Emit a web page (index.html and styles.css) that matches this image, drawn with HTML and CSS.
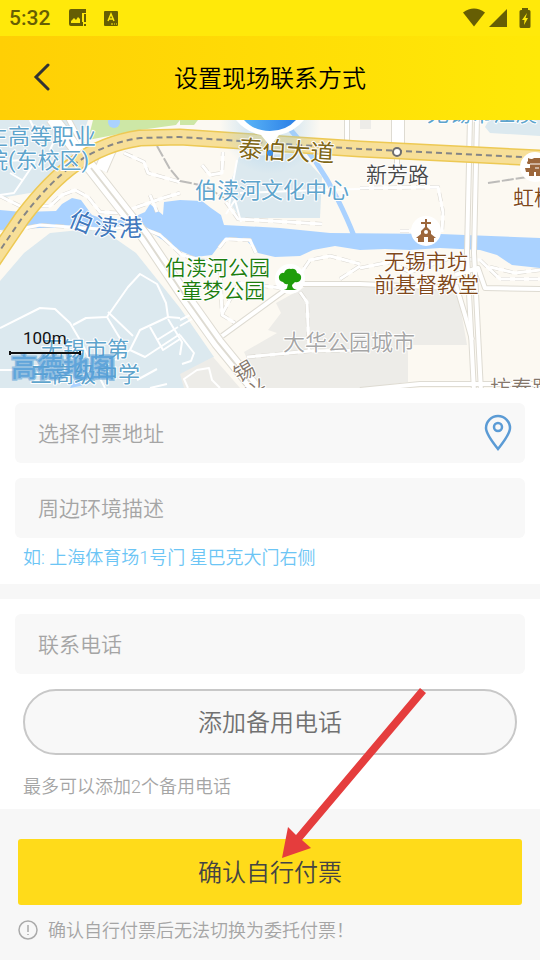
FILE: index.html
```html
<!DOCTYPE html>
<html lang="zh-CN">

<head>
    <meta charset="UTF-8">
    <meta name="viewport" content="width=device-width, initial-scale=1.0">
    <title>设置现场联系方式</title>
    <link rel="stylesheet" href="styles.css">
</head>

<body>
    <div class="status-bar">
        <span class="time">5:32</span>
        <svg class="status-image" width="20" height="20" viewBox="0 0 20 20">
            <path fill="#665e04" d="M3 1H18V5H14V14H15V18H3Q1 18 1 16V3Q1 1 3 1Z" />
            <path fill="#ffe90a" d="M3 15V13L6 10L8 12L10 9L12 11V15Z" />
            <path fill="#665e04" d="M16 6H18V14H16ZM16 16H18V18H16Z" />
        </svg>
        <svg class="status-input" width="16" height="18" viewBox="0 0 16 18">
            <rect x="1" y="2" width="14" height="15" rx="1" fill="#665e04" />
            <path d="M5 12L8 5L11 12M6 10H10" fill="none" stroke="#ffe90a" stroke-width="1.500" />
            <path d="M8 15H10M11 15H12M13 15H14" stroke="#ffe90a" />
        </svg>
        <div class="status-right">
            <svg width="24" height="20" viewBox="0 0 24 20">
                <path fill="#665e04" d="M1 4.500Q12 -3.500 23 4.500L12 18.500Z" />
            </svg>
            <svg width="20" height="20" viewBox="0 0 20 20">
                <path fill="#665e04" d="M1 19L19 1V19Z" />
            </svg>
            <svg class="battery" width="12" height="20" viewBox="0 0 12 20">
                <path fill="#665e04" d="M3 0H9V2H10Q11.500 2 11.500 3.500V18.500Q11.500 20 10 20H2Q0.500 20 0.500 18.500V3.500Q0.500 2 2 2H3Z" />
                <path fill="#ffe90a" d="M8 5L3 12H5.500L5 17L9 10H6.500Z" />
            </svg>
        </div>
    </div>

    <header class="header">
        <button class="back" type="button" aria-label="返回">
            <svg width="18" height="28" viewBox="0 0 18 28">
                <path d="M15 2L3 14L15 26" fill="none" stroke="#333" stroke-width="3" stroke-linecap="round" />
            </svg>
        </button>
        <h1>设置现场联系方式</h1>
    </header>

    <div class="map">
        <svg viewBox="0 120 540 268" preserveAspectRatio="xMidYMid slice">
            <defs>
                <linearGradient id="pin" x1="0" x2="1">
                    <stop offset="0" stop-color="#5bb5f7" />
                    <stop offset="1" stop-color="#2b7fe6" />
                </linearGradient>
                <radialGradient id="glow">
                    <stop offset="0.500" stop-color="#8fc5f0" stop-opacity="0.300" />
                    <stop offset="1" stop-color="#8fc5f0" stop-opacity="0" />
                </radialGradient>
            </defs>
            <rect x="0" y="120" width="540" height="268" fill="#fcf9f2" />

            <!-- 地块 -->
            <path class="school" d="M0 120H88L78 150L62 165L36 192L0 198Z" />
            <path class="school" d="M50 233L80 230L103 230L136 253L180 308L214 357L182 374L188 388H0V281L24 253Z" />
            <path class="school" d="M239 157L300 153L322 177L320 218H240L226 197Z" />
            <path class="school" d="M489 120H540V136L490 133L485 127Z" />
            <path class="park" d="M93 120H180L176 125L140 130L88 140Z" />
            <path class="park" d="M180 120H198L194 125H180Z" />
            <path class="block" d="M276 303L312 283L457 288L467 345H408V382L362 388H260L244 352L277 333L268 330L281 313Z" />
            <path class="block" d="M213 357L240 388H184L180 374Z" />
            <path class="block" d="M360 120H371V129H360Z" />

            <!-- 水系 -->
            <path class="water" d="M0 210L22 212L56 211L62 204L72 198L81 200L92 215L112 222L136 216L145 212L150 204L157 210L163 215L164 202L180 200L202 201L211 208L221 215L224 225L280 228L330 233L440 234L540 238V268L512 265L497 255L480 250L440 248L410 250L385 249L360 250L335 246L313 250L300 256L275 257L258 253L246 240L230 238L221 243L212 255L195 257L178 250L155 235L140 227L115 230L80 227L40 228L0 230Z" />
            <circle class="water" cx="114" cy="122" r="6" />
            <path class="water" d="M70 388L76 376L90 384Z" />
            <path class="canal" d="M289 128Q318 160 337 198Q348 220 354 236" />

            <!-- 小路 -->
            <g class="path-edge">
                <path d="M0 196L20 206L50 206L62 195L75 190L88 197L100 212L120 213L160 199L180 193" />
                <path d="M0 233L40 225L100 229L140 227L160 235L182 255L220 265L222 315L235 323" />
                <path d="M202 165L210 175L222 173L223 152" />
                <path d="M124 153L144 162L148 173L180 182" />
                <path d="M226 202L238 219L322 224" />
                <path d="M219 248L226 239L250 240L256 253" />
                <path d="M300 292L307 302L309 350M247 357L310 351L360 350" />
                <path d="M222 314L239 283L290 289L310 260L330 256L360 264" />
                <path d="M360 188L438 187L443 212L442 232M400 231H415" />
                <path d="M360 268L390 262L410 272L450 258L480 260L500 279L540 279" />
                <path d="M490 267L515 273L540 270M150 195L157 212M340 279L360 266" />
            </g>
            <g class="path">
                <path d="M0 196L20 206L50 206L62 195L75 190L88 197L100 212L120 213L160 199L180 193" />
                <path d="M0 233L40 225L100 229L140 227L160 235L182 255L220 265L222 315L235 323" />
                <path d="M202 165L210 175L222 173L223 152" />
                <path d="M124 153L144 162L148 173L180 182" />
                <path d="M226 202L238 219L322 224" />
                <path d="M219 248L226 239L250 240L256 253" />
                <path d="M300 292L307 302L309 350M247 357L310 351L360 350" />
                <path d="M222 314L239 283L290 289L310 260L330 256L360 264" />
                <path d="M360 188L438 187L443 212L442 232M400 231H415" />
                <path d="M360 268L390 262L410 272L450 258L480 260L500 279L540 279" />
                <path d="M490 267L515 273L540 270M150 195L157 212M340 279L360 266" />
            </g>
            <g class="lane">
                <path d="M0 328L40 308L55 309L70 323L80 340L105 388" />
                <path d="M73 325L86 318L107 317L128 287L140 274L157 284L166 303L168 317L140 330L130 350L115 360" />
                <path d="M107 317L124 345M108 312L133 336M168 317L180 318M150 327L163 350L180 339M157 340L178 327" />
                <path d="M168 319L182 342L180 355M130 350L145 357L180 334M137 380L157 369M150 388L167 384" />
                <path d="M180 320L190 315M180 326L192 319M180 335L194 353L191 361L182 364" />
                <path d="M5 161L24 160M0 195L14 193L35 162M10 173L22 180M60 128L50 150M30 120L38 137M0 370H14" />
                <path d="M188 388L184 379L197 370L209 368L212 380L220 388" />
                <path d="M235 200L226 214M229 205L237 160M235 200L241 222M240 193L320 190L360 189" />
            </g>

            <!-- 铁路 -->
            <g class="rail">
                <path d="M157 146L170 169L180 181L205 186L224 198" />
                <path d="M488 183L540 175" />
            </g>

            <!-- 道路 -->
            <g class="road-edge">
                <path class="wide" d="M52 118L91 168L145 237L186 298L218 343L258 392" />
                <path class="wide" d="M114 140L101 170" />
                <path d="M68 118L92 163" />
                <path d="M222 336L288 288M286 284H360L450 288M455 275L478 268L485 288L540 289" />
                <path class="wide" d="M398 118V150" />
                <path d="M347 118V142M397 152V175" />
                <path d="M470 118L467 253L474 392M477 118L474 253L481 392" />
                <path d="M456 285L465 315L472 340M360 390L420 384L540 384" />
            </g>
            <g class="road">
                <path class="wide" d="M52 118L91 168L145 237L186 298L218 343L258 392" />
                <path class="wide" d="M114 140L101 170" />
                <path d="M68 118L92 163" />
                <path d="M222 336L288 288M286 284H360L450 288M455 275L478 268L485 288L540 289" />
                <path class="wide" d="M398 118V150" />
                <path d="M347 118V142M397 152V175" />
                <path d="M470 118L467 253L474 392M477 118L474 253L481 392" />
                <path d="M456 285L465 315L472 340M360 390L420 384L540 384" />
            </g>
            <path class="road-middle" d="M91 168L145 237L186 298L218 343L258 392" />

            <!-- 泰伯大道 -->
            <path class="avenue-edge" d="M-10 265L22 218Q50 181 76 163Q105 143 140 138L180 137L360 149L540 158" />
            <path class="avenue" d="M-10 265L22 218Q50 181 76 163Q105 143 140 138L180 137L360 149L540 158" />
            <path class="metro" d="M-10 265L22 218Q50 181 76 163Q105 143 140 138L180 137L360 149L540 158" />
            <circle cx="397" cy="152" r="4" fill="#fff" stroke="#6e6e70" stroke-width="2" />

            <!-- 当前位置光晕 -->
            <circle cx="270" cy="124" r="50" fill="url(#glow)" />

            <!-- 地名 -->
            <g class="label label-blue">
                <text x="-14" y="144">生高等职业</text>
                <text x="-14" y="168">院(东校区)</text>
                <text x="195" y="198">伯渎河文化中心</text>
                <text x="427" y="121">无锡市江溪</text>
                <text x="41" y="357">无锡市第</text>
                <text x="30" y="382">三高级中学</text>
            </g>
            <g class="label label-river">
                <text x="67" y="225" transform="rotate(22 67 225)">伯</text>
                <text x="93" y="234" transform="rotate(8 93 234)">渎</text>
                <text x="119" y="237" transform="rotate(-3 119 237)">港</text>
            </g>
            <g class="label label-avenue">
                <text x="238" y="157" transform="rotate(3 238 157)">泰伯大道</text>
            </g>
            <g class="label label-street">
                <text x="366" y="182">新芳路</text>
                <text x="283" y="350" class="faint">大华公园城市</text>
                <text x="490" y="395" class="brown-grey">坊泰路</text>
                <text x="239" y="383" class="brown-grey" transform="rotate(-30 239 383)">锡</text>
                <text x="251" y="402" class="brown-grey" transform="rotate(-30 251 402)">兴</text>
            </g>
            <g class="label label-green">
                <text x="165" y="275">伯渎河公园</text>
                <text x="176" y="298">·童梦公园</text>
            </g>
            <g class="label label-brown">
                <text x="384" y="269">无锡市坊</text>
                <text x="374" y="292">前基督教堂</text>
                <text x="513" y="205">虹桥</text>
            </g>

            <!-- 公园 -->
            <circle cx="290" cy="279" r="15" fill="#fff" />
            <path fill="#1f9d0b" d="M287 288L288 284Q285 285 283 282Q278 281 279 276Q281 272 284 273Q286 268 291 269Q296 268 297 273Q302 274 301 279Q299 283 295 282L292 285Q292 289 297 290H282Q286 290 287 288Z" />
            <!-- 教堂 -->
            <circle cx="426" cy="231" r="15" fill="#fff" />
            <path d="M426 219V229M421 223H431" stroke="#9c673c" stroke-width="2" />
            <path fill="#9c673c" fill-rule="evenodd" d="M426 226L431 231V234L436 238H434V242H428V237H424V242H418V238H416L421 234V231ZM426 230A2 2 0 1 0 426 234A2 2 0 1 0 426 230Z" />
            <!-- 古迹 -->
            <circle cx="535" cy="167" r="15" fill="#fff" />
            <path fill="#9c673c" d="M528 158Q532 160 534 158H544V164H528Q526 163 528 161ZM530 164H544V168H530ZM525 168H544V172H540V176H536V172H534V176H529V172H526Z" />
            <path d="M530 164H542M535 168H539" stroke="#fff" />

            <!-- 当前位置 -->
            <path fill="#fff" d="M236 120H304Q294 132 279 135L270 146L261 135Q246 132 236 120Z" />
            <path fill="url(#pin)" d="M244 120H296Q286 131 270 131Q254 131 244 120Z" />
            <circle cx="270" cy="153" r="3" fill="#3d91ea" />

            <!-- 比例尺 -->
            <text class="logo" x="11" y="377">高德地图</text>
            <text class="scale" x="23" y="344">100m</text>
            <path d="M10 351V355M10 353H80M80 351V355" stroke="#111" stroke-width="2" fill="none" />
        </svg>
    </div>

    <main>
        <section class="section">
            <div class="field">
                <input type="text" placeholder="选择付票地址" aria-label="选择付票地址">
                <svg width="28" height="38" viewBox="0 0 28 38">
                    <path d="M14 35Q2 20 2 14A12 12 0 0 1 26 14Q26 20 14 35Z" fill="none" stroke="#5b9bd5" stroke-width="2.500" />
                    <circle cx="14" cy="13" r="4" fill="none" stroke="#5b9bd5" stroke-width="2.500" />
                </svg>
            </div>
            <div class="field">
                <input type="text" placeholder="周边环境描述" aria-label="周边环境描述">
            </div>
            <p class="hint example">如: 上海体育场1号门 星巴克大门右侧</p>
        </section>

        <section class="section">
            <div class="field">
                <input type="tel" placeholder="联系电话" aria-label="联系电话">
            </div>
            <button class="add-phone" type="button">添加备用电话</button>
            <p class="hint limit">最多可以添加2个备用电话</p>
        </section>

        <div class="footer">
            <button class="confirm" type="button">确认自行付票</button>
            <p class="notice">
                <svg width="20" height="20" viewBox="0 0 20 20">
                    <circle cx="10" cy="10" r="9" fill="none" stroke="#aaa" stroke-width="1.500" />
                    <path d="M10 5V12M10 14V15" stroke="#aaa" stroke-width="1.500" />
                </svg>
                <span>确认自行付票后无法切换为委托付票！</span>
            </p>
            <svg class="arrow" width="146" height="172" viewBox="0 0 146 172">
                <path fill="#e53d3d" d="M139 1L145 6L21 153L30 161L1 171L7 140L15 148Z" />
            </svg>
        </div>
    </main>
</body>

</html>
```
FILE: styles.css
```css
* {
    box-sizing: border-box;
}

body {
    margin: 0;
    background: #f7f7f7;
    font-family: Roboto, "Noto Sans CJK SC", sans-serif;
    font-weight: 350;
}

button,
input {
    font: inherit;
}

svg {
    display: block;
    flex: none;
}

/* 状态栏 */
.status-bar {
    display: flex;
    align-items: center;
    height: 36px;
    padding: 0 9px;
    background: #ffe90a;
}

.time {
    color: #665e04;
    font-size: 21px;
    font-weight: 500;
}

.status-image {
    margin-left: 18px;
}

.status-input {
    margin-left: 15px;
}

.status-right {
    display: flex;
    align-items: center;
    gap: 2px;
    margin-left: auto;
}

.battery {
    margin-left: 9px;
}

/* 标题栏 */
.header {
    display: grid;
    grid-template-columns: 60px 1fr 60px;
    align-items: center;
    height: 84px;
    padding-bottom: 3px;
    background: linear-gradient(to right, #ffcf05, #ffe907);
}

.back {
    padding: 0 0 0 33px;
    border: none;
    background: none;
    cursor: pointer;
}

.header h1 {
    margin: 0;
    color: #000;
    font-size: 24px;
    font-weight: 350;
    text-align: center;
}

/* 地图 */
.map svg {
    width: 100%;
    height: 268px;
}

.school {
    fill: #dce9ef;
}

.park {
    fill: #cde7a6;
}

.block {
    fill: #edece8;
}

.water {
    fill: #aad2ff;
}

.canal {
    fill: none;
    stroke: #aad2ff;
    stroke-width: 5;
}

.path,
.path-edge,
.lane,
.road,
.road-edge,
.rail {
    fill: none;
    stroke-linejoin: round;
}

.path-edge {
    stroke: #dad7d0;
    stroke-width: 4;
    stroke-dasharray: 9 5;
}

.path {
    stroke: #fff;
    stroke-width: 3;
}

.lane {
    stroke: #fff;
    stroke-width: 2;
}

.rail {
    stroke: #bdbcba;
    stroke-width: 2;
    stroke-dasharray: 12 2;
}

.road-edge {
    stroke: #dedbd2;
    stroke-width: 6;
}

.road {
    stroke: #fff;
    stroke-width: 4;
}

.road-edge .wide {
    stroke-width: 14;
}

.road .wide {
    stroke-width: 12;
}

.road-middle {
    fill: none;
    stroke: #dedbd2;
    stroke-width: 2;
}

.avenue-edge,
.avenue,
.metro {
    fill: none;
}

.avenue-edge {
    stroke: #edc954;
    stroke-width: 17;
}

.avenue {
    stroke: #f7df98;
    stroke-width: 14;
}

.metro {
    stroke: #858585;
    stroke-width: 2;
    stroke-dasharray: 6 4;
}

.label {
    font-size: 22px;
    font-weight: 400;
    paint-order: stroke;
    stroke: #fff;
    stroke-width: 2;
    stroke-linejoin: round;
}

.label-blue {
    fill: #5ea4cc;
}

.label-river {
    fill: #4279bd;
    font-size: 24px;
}

.label-avenue {
    fill: #806615;
    font-size: 24px;
}

.label-street {
    fill: #484848;
    font-size: 21px;
    font-weight: 350;
}

.label-green {
    fill: #1c7d0e;
    font-size: 21px;
    font-weight: 350;
}

.label-brown {
    fill: #80481a;
    font-size: 21px;
    font-weight: 350;
}

.faint {
    fill: #a5a5a5;
    font-size: 22px;
}

.brown-grey {
    fill: #85776b;
}

.logo {
    fill: #5aa2da;
    fill-opacity: 0.900;
    font-size: 26px;
    font-weight: 500;
    paint-order: stroke;
    stroke: #4a96d2;
    stroke-opacity: 0.500;
    stroke-width: 3;
}

.scale {
    fill: #111;
    font-size: 17px;
    font-weight: 400;
}

/* 表单 */
.section {
    margin-bottom: 15px;
    padding: 15px 15px 0;
    background: #fff;
}

.field {
    display: flex;
    align-items: center;
    height: 60px;
    padding: 0 13px 0 23px;
    border-radius: 6px;
    background: #f8f8f8;
}

.field + .field {
    margin-top: 15px;
}

.field input {
    flex: 1;
    min-width: 0;
    padding: 2px 0 0;
    border: none;
    outline: none;
    background: none;
    color: #333;
    font-size: 21px;
}

.field input::placeholder {
    color: #a5a5a5;
}

.hint {
    margin: 0 8px;
    font-size: 18px;
    line-height: 24px;
}

.example {
    padding: 8px 0 14px;
    color: #6cc5f5;
}

.add-phone {
    display: block;
    width: calc(100% - 16px);
    height: 66px;
    margin: 15px 8px 0;
    padding: 0 0 3px;
    border: 2px solid #c8c8c8;
    border-radius: 33px;
    background: #f8f8f8;
    color: #717171;
    font-size: 24px;
    cursor: pointer;
}

.limit {
    padding: 20px 0 10px;
    color: #a5a5a5;
}

/* 底部 */
.footer {
    position: relative;
    padding: 15px 18px;
}

.confirm {
    display: block;
    width: 100%;
    height: 66px;
    padding: 0 0 3px;
    border: none;
    border-radius: 3px;
    background: #ffdb1a;
    color: #444;
    font-size: 24px;
    cursor: pointer;
}

.notice {
    display: flex;
    align-items: center;
    gap: 10px;
    margin: 12px 0 0;
    color: #a5a5a5;
    font-size: 18px;
    line-height: 24px;
}

.notice span {
    padding-top: 2px;
}

/* 指向确认按钮的箭头 */
.arrow {
    position: absolute;
    bottom: 99px;
    left: 52%;
    pointer-events: none;
}
```
